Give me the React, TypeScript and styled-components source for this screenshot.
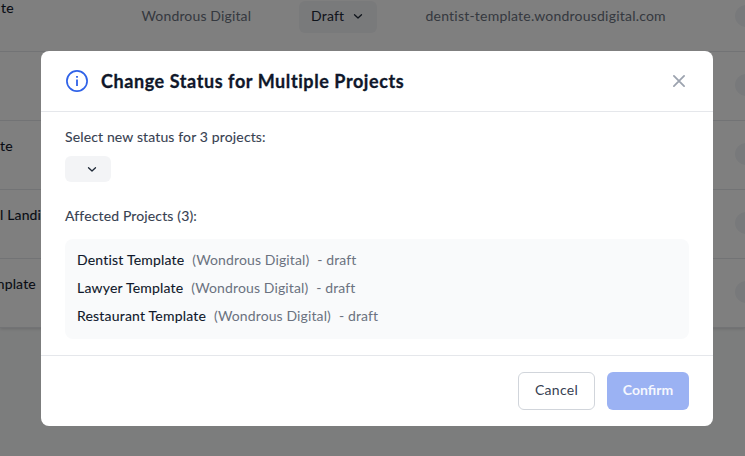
import React from "react";
import styled, { createGlobalStyle } from "styled-components";

const GlobalStyle = createGlobalStyle`
  * { box-sizing: border-box; }
  html, body { margin: 0; height: 100%; overflow: hidden; }
  body {
    font-family: Lato, "Open Sans", sans-serif;
    font-size: 14px;
    line-height: 20px;
    background: #f9fafb;
    color: #0f172a;
  }
  button { font: inherit; margin: 0; cursor: pointer; }
`;

const Page = styled.div`
  position: relative;
  width: 745px;
  height: 456px;
  overflow: hidden;
`;

const Table = styled.div`
  margin-top: -17px;
  background: #fff;
  box-shadow: 0 1px 3px rgba(0, 0, 0, 0.15);
`;

const Row = styled.div`
  display: grid;
  grid-template-columns: 141px 158px 126px 310px 40px;
  align-items: center;
  height: 69px;
  padding-bottom: 1px;
  border-bottom: 1px solid #e5e7eb;
`;

const Name = styled.div<{ $shift: number }>`
  align-self: start;
  margin: 15px 0 0 ${(p) => p.$shift}px;
  letter-spacing: 0.15px;
  -webkit-text-stroke: 0.1px currentColor;
  white-space: nowrap;
`;

const Muted = styled.div<{ $spacing: number }>`
  padding: 0 0 2px 0.5px;
  color: #6b7280;
  letter-spacing: ${(p) => p.$spacing}px;
`;

const StatusButton = styled.button<{ $width: number; $height: number }>`
  display: flex;
  align-items: center;
  justify-content: space-between;
  width: ${(p) => p.$width}px;
  height: ${(p) => p.$height}px;
  padding: 0 13px 1px 12px;
  border: 0;
  border-radius: 6px;
  background: #f3f4f6;
  color: #1f2937;
  letter-spacing: 0.2px;
`;

const RoundAction = styled.span`
  width: 22px;
  height: 22px;
  margin-bottom: 2px;
  border-radius: 50%;
  background: #f1f3f6;
`;

const Overlay = styled.div`
  position: absolute;
  inset: 0;
  padding: 51px 32px 30px 41px;
  background: rgba(0, 0, 0, 0.5);
`;

const Dialog = styled.section`
  display: flex;
  flex-direction: column;
  width: 672px;
  height: 375px;
  border-radius: 8px;
  background: #fff;
`;

const Header = styled.header`
  display: flex;
  align-items: center;
  height: 61px;
  padding: 0 24px;
  border-bottom: 1px solid #e5e7eb;
`;

const Title = styled.h2`
  flex: 1;
  margin: 0 0 0 12px;
  font-size: 18px;
  line-height: 28px;
  font-weight: 700;
  letter-spacing: 0.58px;
  -webkit-text-stroke: 0.3px currentColor;
`;

const CloseButton = styled.button`
  display: flex;
  padding: 0;
  border: 0;
  background: none;
  color: #9ca3af;
`;

const Body = styled.div`
  flex: 1;
  padding: 15px 24px 0;
`;

const Label = styled.div<{ $gap: number }>`
  margin-bottom: ${(p) => p.$gap}px;
  color: #374151;
  letter-spacing: 0.14px;
  -webkit-text-stroke: 0.1px currentColor;
`;

const Section = styled.div`
  margin-bottom: 24px;
`;

const ProjectList = styled.ul`
  display: grid;
  gap: 8px;
  margin: 0;
  height: 100px;
  padding: 11px 12px 13px;
  list-style: none;
  border-radius: 8px;
  background: #f9fafb;
`;

const Project = styled.li`
  display: flex;
  gap: 8px;
  height: 20px;
  color: #6b7280;
  letter-spacing: 0.12px;
`;

const ProjectName = styled.span`
  color: #0f172a;
  letter-spacing: 0.2px;
  -webkit-text-stroke: 0.1px currentColor;
`;

const Footer = styled.footer`
  display: flex;
  justify-content: flex-end;
  gap: 12px;
  height: 71px;
  padding: 16px 24px;
  border-top: 1px solid #e5e7eb;
`;

const ActionButton = styled.button<{ $primary?: boolean }>`
  width: ${(p) => (p.$primary ? 82 : 77)}px;
  height: 38px;
  padding: 0 0 2px;
  border: ${(p) => (p.$primary ? "0" : "1px solid #d1d5db")};
  border-radius: 6px;
  background: ${(p) => (p.$primary ? "#9bb2f3" : "#fff")};
  color: ${(p) => (p.$primary ? "#f5f7fe" : "#374151")};
  font-weight: ${(p) => (p.$primary ? 700 : 400)};
  letter-spacing: ${(p) => (p.$primary ? 0 : 0.3)}px;
`;

const Chevron = () => (
  <svg width="12" height="12" viewBox="0 0 12 12" fill="none">
    <path d="M2.5 4.7 6 8l3.5-3.3" stroke="currentColor" strokeWidth="1.3" strokeLinecap="round" strokeLinejoin="round" />
  </svg>
);

const InfoIcon = () => (
  <svg width="24" height="24" viewBox="0 0 24 24" fill="none" stroke="#2f62e8">
    <circle cx="12" cy="12" r="10.1" strokeWidth="1.7" />
    <path d="M12 10.6V17M12 7.1v1.7" strokeWidth="1.8" />
  </svg>
);

const CloseIcon = () => (
  <svg width="20" height="20" viewBox="0 0 20 20" fill="none">
    <path d="m4.9 4.9 10.2 10.2m0-10.2L4.9 15.1" stroke="currentColor" strokeWidth="1.8" strokeLinecap="round" />
  </svg>
);

const rows = [
  { name: "te", shift: 1, details: true },
  { name: "", shift: 0 },
  { name: "te", shift: 0 },
  { name: "l Landing", shift: 0 },
  { name: "mplate", shift: -7 },
];

const projects = ["Dentist Template", "Lawyer Template", "Restaurant Template"];

export default function App() {
  return (
    <>
      <GlobalStyle />
      <Page>
        <Table>
          {rows.map((row, i) => (
            <Row key={i}>
              <Name $shift={row.shift}>{row.name}</Name>
              <Muted $spacing={0.15}>{row.details && "Wondrous Digital"}</Muted>
              <div>
                {row.details && (
                  <StatusButton $width={78} $height={32}>
                    Draft
                    <Chevron />
                  </StatusButton>
                )}
              </div>
              <Muted $spacing={0.22}>{row.details && "dentist-template.wondrousdigital.com"}</Muted>
              <RoundAction />
            </Row>
          ))}
        </Table>
        <Overlay>
          <Dialog role="dialog" aria-modal="true">
            <Header>
              <InfoIcon />
              <Title>Change Status for Multiple Projects</Title>
              <CloseButton aria-label="Close">
                <CloseIcon />
              </CloseButton>
            </Header>
            <Body>
              <Section>
                <Label $gap={9}>Select new status for 3 projects:</Label>
                <StatusButton $width={46} $height={26} aria-label="Status">
                  <span />
                  <Chevron />
                </StatusButton>
              </Section>
              <Label $gap={13}>Affected Projects (3):</Label>
              <ProjectList>
                {projects.map((name) => (
                  <Project key={name}>
                    <ProjectName>{name}</ProjectName>
                    <span>(Wondrous Digital)</span>
                    <span>- draft</span>
                  </Project>
                ))}
              </ProjectList>
            </Body>
            <Footer>
              <ActionButton>Cancel</ActionButton>
              <ActionButton $primary>Confirm</ActionButton>
            </Footer>
          </Dialog>
        </Overlay>
      </Page>
    </>
  );
}
